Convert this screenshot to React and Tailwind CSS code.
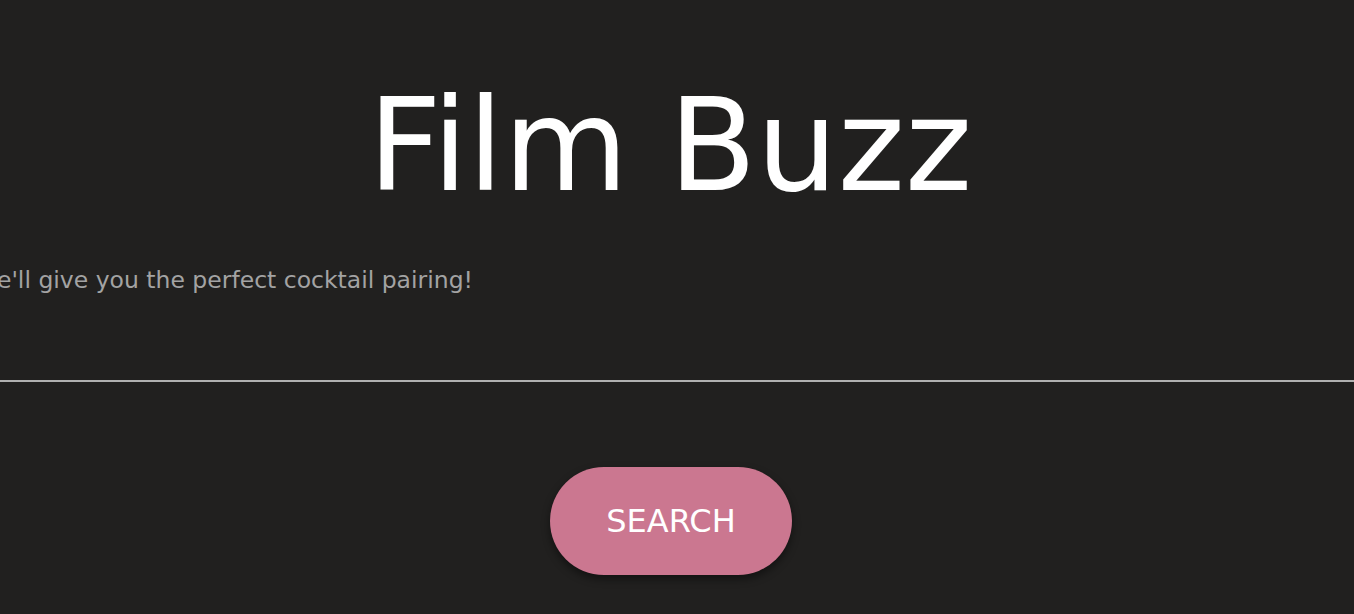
export default function App() {
  return (
    <div className="min-h-[614px] w-full overflow-hidden bg-[#21201f] font-['DejaVu_Sans',Verdana,sans-serif]">
      {/* Titol */}
      <h1 className="pt-[82px] pr-[14px] text-center text-[128px] leading-none text-white">Film Buzz</h1>

      {/* Cercador */}
      <form onSubmit={e => e.preventDefault()} className="mt-[56px] flex flex-col items-center">
        <div className="w-full overflow-hidden">
          <input
            type="text"
            placeholder="Enter a movie and we'll give you the perfect cocktail pairing!"
            className="-ml-[246px] block w-[calc(100%+492px)] border-b-2 border-[#b0b0b0] bg-transparent pb-[86px] text-[23.5px] leading-[23px] text-white placeholder:text-[#a3a3a3] focus:outline-none"
          />
        </div>
        <button
          type="submit"
          className="mt-[85px] mr-[12px] h-[108px] w-[242px] rounded-full bg-[#cb7790] text-[32px] uppercase text-white shadow-[0_4px_8px_rgba(0,0,0,0.45)]"
        >
          Search
        </button>
      </form>
    </div>
  )
}
